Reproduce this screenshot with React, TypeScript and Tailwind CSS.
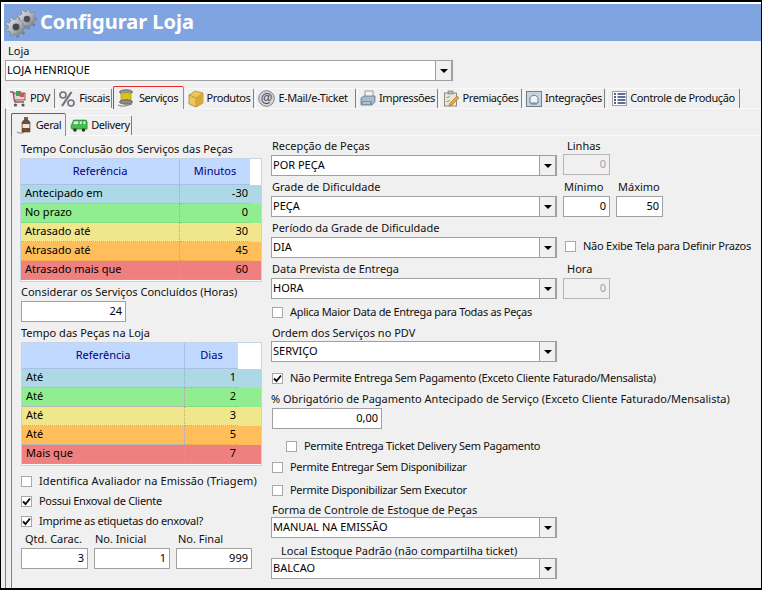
import type { ReactNode } from "react";

const gearPath = (cx: number, cy: number, r: number, teeth: number) => {
  const pts: string[] = [];
  for (let i = 0; i < teeth; i++) {
    const a = (i / teeth) * Math.PI * 2;
    const s = (Math.PI * 2) / teeth;
    const list: [number, number][] = [
      [a - s * 0.5, r * 0.74],
      [a - s * 0.22, r * 0.74],
      [a - s * 0.14, r],
      [a + s * 0.14, r],
      [a + s * 0.22, r * 0.74],
    ];
    list.forEach(([t, d]) => pts.push(`${(cx + Math.cos(t) * d).toFixed(2)},${(cy + Math.sin(t) * d).toFixed(2)}`));
  }
  return `M${pts.join("L")}Z`;
};

function Gears() {
  return (
    <svg width="32" height="32" viewBox="0 0 32 32">
      <defs>
        <linearGradient id="gearFill" x1="0" y1="0" x2="1" y2="1">
          <stop offset="0" stopColor="#f2f4f6" />
          <stop offset="0.55" stopColor="#a9aeb4" />
          <stop offset="1" stopColor="#5d6268" />
        </linearGradient>
      </defs>
      <path d={gearPath(22, 12, 10, 9)} fill="url(#gearFill)" stroke="#6b7076" strokeWidth="0.5" />
      <circle cx="22" cy="12" r="3.2" fill="#4b4f55" />
      <path d={gearPath(11, 20, 10.5, 9)} fill="url(#gearFill)" stroke="#6b7076" strokeWidth="0.5" />
      <circle cx="11" cy="20" r="3.4" fill="#44484d" />
    </svg>
  );
}

const icons: Record<string, ReactNode> = {
  cart: (
    <svg width="18" height="18" viewBox="0 0 18 18">
      <path d="M1 2h3l2 10h9" fill="none" stroke="#8a5a5a" strokeWidth="1.4" />
      <rect x="5" y="3" width="11" height="7" fill="#d9d9d9" stroke="#b04444" />
      <rect x="7" y="1" width="5" height="5" fill="#46a05a" />
      <rect x="11" y="3" width="4" height="4" fill="#d9534f" />
      <circle cx="6.5" cy="15" r="1.6" fill="#555" />
      <circle cx="14" cy="15" r="1.6" fill="#555" />
    </svg>
  ),
  percent: (
    <svg width="18" height="18" viewBox="0 0 18 18">
      <path d="M13.5 2 4 16" stroke="#6d7278" strokeWidth="2.2" />
      <circle cx="5" cy="5" r="3" fill="#eee" stroke="#6d7278" strokeWidth="1.6" />
      <circle cx="13" cy="13" r="3" fill="#eee" stroke="#6d7278" strokeWidth="1.6" />
    </svg>
  ),
  spool: (
    <svg width="20" height="18" viewBox="0 0 20 18">
      <path d="M2 16c4 2 8 1 14-1" fill="none" stroke="#777" strokeWidth="1" />
      <ellipse cx="10" cy="3" rx="6.5" ry="2.2" fill="#9b9b93" stroke="#444" strokeWidth="0.7" />
      <rect x="5" y="4" width="10" height="8" fill="#ead21f" stroke="#917f10" strokeWidth="0.6" />
      <path d="M5 6h10M5 8h10M5 10h10" stroke="#b8a20f" strokeWidth="0.6" />
      <ellipse cx="10" cy="13" rx="6.5" ry="2.2" fill="#8d8d85" stroke="#444" strokeWidth="0.7" />
    </svg>
  ),
  box: (
    <svg width="16" height="18" viewBox="0 0 16 18">
      <path d="M1 5 7 1l8 2v10l-7 4-7-3z" fill="#ecc75a" stroke="#a8842a" strokeWidth="0.7" />
      <path d="M1 5l7 3 7-5M8 8v9" fill="none" stroke="#a8842a" strokeWidth="0.7" />
      <path d="M8 8l7-5v10l-7 4z" fill="#d8a93a" />
    </svg>
  ),
  at: (
    <svg width="17" height="17" viewBox="0 0 17 17">
      <circle cx="8.5" cy="8.5" r="7.8" fill="#d5d7da" stroke="#7d8186" />
      <text x="8.5" y="12.4" textAnchor="middle" fontSize="12" fontWeight="700" fill="#4e5257" fontFamily="'Liberation Sans', sans-serif">@</text>
    </svg>
  ),
  printer: (
    <svg width="16" height="17" viewBox="0 0 16 17">
      <path d="M5 1h8v6H5z" fill="#f4f4f4" stroke="#6a7683" strokeWidth="0.7" />
      <path d="M1 8l3-2h11v6l-3 3H1z" fill="#a9bccb" stroke="#5a6875" strokeWidth="0.7" />
      <path d="M1 11h11v4H1z" fill="#7e95a8" />
      <path d="M3 13h7" stroke="#e6eef5" />
    </svg>
  ),
  award: (
    <svg width="17" height="17" viewBox="0 0 17 17">
      <rect x="1.5" y="3" width="12" height="13" fill="#e9e6d8" stroke="#77756a" strokeWidth="0.8" />
      <rect x="5" y="1" width="5" height="3" fill="#b7b7b0" stroke="#666" strokeWidth="0.5" />
      <path d="M3.5 7l1 1 2-2M3.5 11l1 1 2-2" fill="none" stroke="#3f9b4b" strokeWidth="0.9" />
      <path d="M7 13l7-7 2 2-7 7-3 1z" fill="#e8a33a" stroke="#9c6416" strokeWidth="0.5" />
    </svg>
  ),
  integ: (
    <svg width="16" height="16" viewBox="0 0 16 16">
      <rect x="0.5" y="0.5" width="15" height="15" fill="#c5d2e0" stroke="#71808f" />
      <path d="M4 12V8c0-5 8-5 8 0v4z" fill="#f0f3f6" stroke="#707d8a" />
      <path d="M5 13h6" stroke="#707d8a" />
    </svg>
  ),
  list: (
    <svg width="15" height="15" viewBox="0 0 15 15">
      <rect x="0.5" y="0.5" width="14" height="14" fill="#fff" stroke="#9aa3ad" />
      <path d="M2 3h2M2 6h2M2 9h2M2 12h2" stroke="#1f2d5a" strokeWidth="1.4" />
      <path d="M5.5 3h8M5.5 6h8M5.5 9h8M5.5 12h8" stroke="#2c3f7a" strokeWidth="1.4" />
    </svg>
  ),
  bottle: (
    <svg width="17" height="18" viewBox="0 0 17 18">
      <path d="M1 16c4 2 7 1 8-1" fill="none" stroke="#777" strokeWidth="1" />
      <rect x="8" y="1" width="4" height="3" fill="#666" />
      <path d="M6 6l2-2h4l2 2v10H6z" fill="#7a4a30" stroke="#444" strokeWidth="0.6" />
      <rect x="6.5" y="8" width="7" height="4" fill="#e9e4dc" />
    </svg>
  ),
  van: (
    <svg width="18" height="15" viewBox="0 0 20 16">
      <path d="M1 9l3-7h14l1 2v8H2z" fill="#42c142" stroke="#1f7a1f" strokeWidth="0.7" />
      <path d="M4.5 3h5v4H3zM10.5 3h3v4h-3zM14.5 3h3v4h-3z" fill="#c9f0ff" stroke="#1f7a1f" strokeWidth="0.4" />
      <circle cx="5.5" cy="13" r="2" fill="#333" />
      <circle cx="15" cy="13" r="2" fill="#333" />
    </svg>
  ),
};

const mainTabs = [
  { label: "PDV", icon: "cart", w: "w-[48px]", gap: "mr-[2px] pr-[3px]" },
  { label: "Fiscais", icon: "percent", w: "w-[55px]", gap: "mr-px pr-px" },
  { label: "Serviços", icon: "spool", w: "w-[71px]", gap: "mr-[2px] pr-[3px]", active: true },
  { label: "Produtos", icon: "box", w: "w-[68px]", gap: "mr-px pr-[2px]" },
  { label: "E-Mail/e-Ticket", icon: "at", w: "w-[101px]", gap: "mr-px pr-[5px]" },
  { label: "Impressões", icon: "printer", w: "w-[81px]", gap: "mr-px" },
  { label: "Premiações", icon: "award", w: "w-[83px]", gap: "mr-px" },
  { label: "Integrações", icon: "integ", w: "w-[82px]", gap: "mr-[2px]" },
  { label: "Controle de Produção", icon: "list", w: "w-[133px]", gap: "" },
];

const minutos = [
  { ref: "Antecipado em", val: "-30", bg: "bg-[#add8e6]" },
  { ref: "No prazo", val: "0", bg: "bg-[#90ee90]" },
  { ref: "Atrasado até", val: "30", bg: "bg-[#f0e68c]" },
  { ref: "Atrasado até", val: "45", bg: "bg-[#ffbe5a]" },
  { ref: "Atrasado mais que", val: "60", bg: "bg-[#f08080]" },
];

const dias = [
  { ref: "Até", val: "1", bg: "bg-[#add8e6]" },
  { ref: "Até", val: "2", bg: "bg-[#90ee90]" },
  { ref: "Até", val: "3", bg: "bg-[#f0e68c]" },
  { ref: "Até", val: "5", bg: "bg-[#ffbe5a]" },
  { ref: "Mais que", val: "7", bg: "bg-[#f08080]" },
];

function Tab({ label, icon, w, gap, active }: { label: string; icon: string; w: string; gap: string; active?: boolean }) {
  return (
    <div
      className={`${w} ${gap} flex items-center justify-center gap-[3px] rounded-t-[2px] border-x border-t tracking-[-0.4px] whitespace-nowrap ${
        active
          ? "relative z-10 -mb-px h-[23px] border-t-[#e8282e] border-l-[#e8282e] border-r-[#909090] bg-[#f0f0f0]"
          : "h-[20px] border-t-[#fafafa] border-l-[#fafafa] border-r-[#808080] bg-[#f0f0f0]"
      }`}
    >
      <span className="flex shrink-0">{icons[icon]}</span>
      <span>{label}</span>
    </div>
  );
}

function Select({ value, w = "w-[286px]" }: { value: string; w?: string }) {
  return (
    <div className={`${w} flex h-[21px] border border-[#a0a0a0] bg-white`}>
      <div className="flex-1 pl-px leading-[18px] text-black">{value}</div>
      <div className="flex w-[17px] items-center justify-center border-x border-[#a0a0a0] bg-[#f0f0f0]">
        <div className="h-0 w-0 border-x-[4px] border-t-[4px] border-x-transparent border-t-black" />
      </div>
    </div>
  );
}

function NumInput({ value, w, disabled }: { value: string; w: string; disabled?: boolean }) {
  return (
    <div
      className={`${w} h-[21px] border pr-[3px] text-right leading-[18px] ${
        disabled ? "border-[#b5b5b5] bg-[#f0f0f0] text-[#a0a0a0]" : "border-[#a0a0a0] bg-white text-black"
      }`}
    >
      {value}
    </div>
  );
}

function Check({ label, checked, className = "", tracking = "tracking-[-0.3px]" }: { label: string; checked?: boolean; className?: string; tracking?: string }) {
  return (
    <div className={`flex h-[20px] items-center whitespace-nowrap ${className}`}>
      <div className="mr-[7px] flex h-[11px] w-[11px] shrink-0 items-center justify-center border border-[#a8a8a8] bg-white">
        {checked && (
          <svg width="9" height="9" viewBox="0 0 9 9">
            <path d="M1 4.5 3.5 7 8 1.5" fill="none" stroke="#111" strokeWidth="1.9" />
          </svg>
        )}
      </div>
      <span className={tracking}>{label}</span>
    </div>
  );
}

function Grid({ head, rows, refW, valW, className = "" }: { head: string; rows: { ref: string; val: string; bg: string }[]; refW: string; valW: string; className?: string }) {
  return (
    <div className={`border border-[#c5d3e8] bg-white ${className}`}>
      <div className="flex h-[26px] text-[#000080]">
        <div className={`${refW} flex items-center justify-center border-r border-b border-[#a9c0e4] bg-[#c1d9ff]`}>Referência</div>
        <div className={`${valW} flex items-center justify-center border-b border-[#a9c0e4] bg-[#c1d9ff]`}>{head}</div>
      </div>
      {rows.map((r, i) => (
        <div key={i} className={`flex h-[19px] text-black ${r.bg}`}>
          <div className={`${refW} border-r border-b border-dotted border-[#a8a8a8] pl-[4px] leading-[15px]`}>{r.ref}</div>
          <div className={`${valW} border-b border-dotted border-[#a8a8a8] pr-[2px] text-right leading-[15px]`}>{r.val}</div>
        </div>
      ))}
    </div>
  );
}

export default function App() {
  return (
    <div className="flex h-[590px] w-[762px] flex-col overflow-hidden border-x border-t-2 border-b-2 border-black bg-[#f0f0f0] font-['Noto_Sans',sans-serif] text-[11px] text-[#111]">
      <div className="bg-white pt-[2px] pl-[3px]">
        <div className="flex h-[37px] items-center gap-[3px] bg-[#7fa4df] pl-px text-white">
          <Gears />
          <h1 className="pb-[2px] text-[20px] font-bold">Configurar Loja</h1>
        </div>
      </div>

      <div className="flex flex-1 flex-col pl-[4px]">
        <div className="h-[19px] pl-[3px] leading-[19px]">Loja</div>
        <Select value="LOJA HENRIQUE" w="w-[448px]" />

        <div className="mt-[5px] ml-[2px] flex h-[22px] items-end">
          {mainTabs.map((t) => (
            <Tab key={t.label} {...t} />
          ))}
        </div>

        <div className="flex flex-1 flex-col border-t border-l border-t-[#fafafa] border-l-[#808080]">
          <div className="mt-[4px] ml-[5px] flex h-[22px] items-end">
            <Tab label="Geral" icon="bottle" w="w-[55px]" gap="mr-[2px]" active />
            <Tab label="Delivery" icon="van" w="w-[64px]" gap="" />
          </div>

          <div className="ml-[5px] flex flex-1 gap-[9px] border-t border-l border-t-[#fafafa] border-l-[#808080] pl-[9px]">
            {/* coluna esquerda */}
            <div className="flex w-[241px] flex-col">
              <div className="mt-[3px] h-[19px] leading-[19px] whitespace-nowrap">Tempo Conclusão dos Serviços das Peças</div>
              <Grid head="Minutos" rows={minutos} refW="w-[159px]" valW="w-[70px]" className="-ml-px h-[124px] w-[242px]" />
              <div className="mt-[1px] h-[18px] leading-[18px] whitespace-nowrap">Considerar os Serviços Concluídos (Horas)</div>
              <NumInput value="24" w="w-[105px]" />
              <div className="h-[20px] leading-[22px]">Tempo das Peças na Loja</div>
              <Grid head="Dias" rows={dias} refW="w-[163px]" valW="w-[53px]" className="h-[124px]" />
              <Check label="Identifica Avaliador na Emissão (Triagem)" className="mt-[5px]" tracking="tracking-[0.12px]" />
              <Check label="Possui Enxoval de Cliente" checked />
              <Check label="Imprime as etiquetas do enxoval?" checked />
              <div className="flex h-[17px] leading-[15px]">
                <span className="w-[73px] pl-[4px]">Qtd. Carac.</span>
                <span className="w-[83px] pl-px">No. Inicial</span>
                <span className="pl-[1px]">No. Final</span>
              </div>
              <div className="flex gap-[6px]">
                <NumInput value="3" w="w-[67px]" />
                <NumInput value="1" w="w-[76px]" />
                <NumInput value="999" w="w-[76px]" />
              </div>
            </div>

            {/* coluna direita */}
            <div className="flex flex-col">
              <div className="flex gap-[6px]">
                <div>
                  <div className="mt-[1px] h-[18px] pl-px leading-[18px]">Recepção de Peças</div>
                  <Select value="POR PEÇA" />
                </div>
                <div>
                  <div className="mt-[1px] h-[17px] pl-[4px] leading-[18px]">Linhas</div>
                  <NumInput value="0" w="w-[47px]" disabled />
                </div>
              </div>
              <div className="flex gap-[6px]">
                <div>
                  <div className="h-[20px] pl-px leading-[22px]">Grade de Dificuldade</div>
                  <Select value="PEÇA" />
                </div>
                <div>
                  <div className="flex h-[20px] leading-[22px]">
                    <span className="w-[55px] pl-px">Mínimo</span>
                    <span>Máximo</span>
                  </div>
                  <div className="flex gap-[6px]">
                    <NumInput value="0" w="w-[47px]" />
                    <NumInput value="50" w="w-[47px]" />
                  </div>
                </div>
              </div>
              <div className="flex gap-[6px]">
                <div>
                  <div className="h-[20px] pl-px leading-[22px]">Período da Grade de Dificuldade</div>
                  <Select value="DIA" />
                </div>
                <Check label="Não Exibe Tela para Definir Prazos" className="mt-[19px] pl-[2px]" tracking="tracking-[-0.25px]" />
              </div>
              <div className="flex gap-[6px]">
                <div>
                  <div className="h-[20px] pl-px leading-[22px]">Data Prevista de Entrega</div>
                  <Select value="HORA" />
                </div>
                <div>
                  <div className="h-[20px] pl-[4px] leading-[22px]">Hora</div>
                  <NumInput value="0" w="w-[47px]" disabled />
                </div>
              </div>
              <Check label="Aplica Maior Data de Entrega para Todas as Peças" className="mt-[3px] pl-px" />
              <div className="mt-[1px] h-[18px] pl-px leading-[20px]">Ordem dos Serviços no PDV</div>
              <Select value="SERVIÇO" />
              <Check label="Não Permite Entrega Sem Pagamento (Exceto Cliente Faturado/Mensalista)" checked className="mt-[6px] pl-px" />
              <div className="h-[19px] leading-[21px] whitespace-nowrap">% Obrigatório de Pagamento Antecipado de Serviço (Exceto Cliente Faturado/Mensalista)</div>
              <NumInput value="0,00" w="w-[110px] ml-px mt-px" />
              <Check label="Permite Entrega Ticket Delivery Sem Pagamento" className="mt-[7px] pl-[15px]" />
              <Check label="Permite Entregar Sem Disponibilizar" className="mt-px pl-px" />
              <Check label="Permite Disponibilizar Sem Executor" className="mt-[3px] pl-px" />
              <div className="h-[17px] pl-px leading-[20px]">Forma de Controle de Estoque de Peças</div>
              <Select value="MANUAL NA EMISSÃO" />
              <div className="h-[20px] pl-[10px] leading-[25px]">Local Estoque Padrão (não compartilha ticket)</div>
              <Select value="BALCAO" />
            </div>
          </div>
        </div>
      </div>
    </div>
  );
}
